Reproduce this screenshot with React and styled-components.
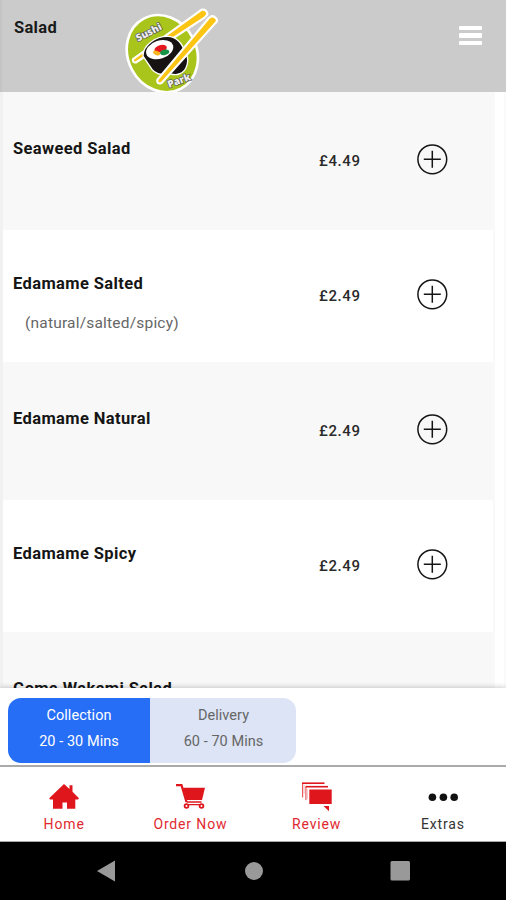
import React from "react";
import styled, { createGlobalStyle } from "styled-components";

const items = [
  { name: "Seaweed Salad", price: "£4.49" },
  { name: "Edamame Salted", price: "£2.49", note: "(natural/salted/spicy)" },
  { name: "Edamame Natural", price: "£2.49" },
  { name: "Edamame Spicy", price: "£2.49" },
  { name: "Goma Wakami Salad" },
];

const Logo = () => (
  <LogoSvg viewBox="0 0 360 276">
    <ellipse
      cx="157"
      cy="161"
      rx="103"
      ry="119"
      transform="rotate(-28 157 161)"
      fill="#a9c51c"
      stroke="#fff"
      strokeWidth="8"
    />
    <Chopstick d="M72 179L276 32Q287 31 289 42L282 50L77 184Q71 185 72 179Z" />
    <path
      d="M99 168C99 134 138 109 172 109C201 109 220 134 224 158C241 174 233 214 207 222C190 228 178 218 170 222C151 227 134 219 126 208Z"
      fill="#171313"
      stroke="#fff"
      strokeWidth="4"
    />
    <ellipse cx="149" cy="149" rx="42" ry="27" transform="rotate(-18 149 149)" fill="#fff" />
    <ellipse cx="152" cy="146" rx="19" ry="11" transform="rotate(-16 152 146)" fill="#e4181e" />
    <ellipse cx="140" cy="159" rx="11" ry="6" transform="rotate(20 140 159)" fill="#f6b51d" />
    <ellipse cx="164" cy="157" rx="14" ry="8" transform="rotate(-12 164 157)" fill="#159447" />
    <Chopstick d="M145 241L299 56Q307 48 316 57Q320 62 313 68L153 246Q143 250 145 241Z" />
    <LogoText transform="translate(84 125) rotate(-27)">Sushi</LogoText>
    <LogoText transform="translate(177 264) rotate(-20)">Park</LogoText>
  </LogoSvg>
);

const PlusIcon = () => (
  <svg width="32" height="32" viewBox="0 0 32 32" fill="none" stroke="#151515">
    <circle cx="16.3" cy="16.3" r="14.4" strokeWidth="1.5" />
    <path d="M16.3 7.8V24.8M7.8 16.3H24.8" strokeWidth="1.5" />
  </svg>
);

const HomeIcon = () => (
  <TabSvg viewBox="0 0 30 30" fill="#df171d">
    <path d="M15 2L20.5 7V3.2H23.5V9.8L30 16.2L29 17.5H26.3V26.8H18V20.5H13.5V26.8H4V17.5H1L.2 16.2Z" />
  </TabSvg>
);

const CartIcon = () => (
  <TabSvg viewBox="0 0 30 30">
    <path d="M1 3.2H6.5L11.5 20" fill="none" stroke="#df171d" strokeWidth="2.2" />
    <path d="M8 5.7H30L27 18H11.5Z" fill="#df171d" />
    <path d="M11.5 20H26.5M12 22.6H26" stroke="#df171d" strokeWidth="1.3" />
    <circle cx="11.5" cy="24" r="1.9" fill="#fff" stroke="#df171d" strokeWidth="1.8" />
    <circle cx="26.5" cy="24" r="1.9" fill="#fff" stroke="#df171d" strokeWidth="1.8" />
  </TabSvg>
);

const ReviewIcon = () => (
  <TabSvg viewBox="0 0 30 30">
    <g fill="none" stroke="#df171d">
      <path d="M0 1.2H22.5" strokeWidth="1.6" />
      <path d="M3.5 4.7H26" strokeWidth="1.6" />
      <path d="M.6 1V15.5M3.9 5V18" strokeWidth="1.1" opacity=".75" />
      <path d="M2.2 3V12M5.4 7V17" strokeWidth=".7" opacity=".35" />
    </g>
    <path d="M7.3 7.5H29.7V22H7.3Z" fill="#df171d" />
    <path d="M21.5 24H27V29.2Z" fill="#df171d" />
  </TabSvg>
);

const DotsIcon = () => (
  <TabSvg viewBox="0 0 30 30" fill="#111">
    <circle cx="4.4" cy="15.2" r="3.8" />
    <circle cx="15.4" cy="15.2" r="3.8" />
    <circle cx="26.2" cy="15.2" r="3.8" />
  </TabSvg>
);

const tabs = [
  { label: "Home", Icon: HomeIcon },
  { label: "Order Now", Icon: CartIcon },
  { label: "Review", Icon: ReviewIcon },
  { label: "Extras", Icon: DotsIcon, dark: true },
];

const App = () => {
  return (
    <Screen>
      <GlobalStyle />
      <Header>
        <Title>Salad</Title>
        <Logo />
        <MenuButton aria-label="Menu">
          <MenuBar />
          <MenuBar />
          <MenuBar />
        </MenuButton>
      </Header>
      <List>
        {items.map((item, i) => (
          <Item key={item.name} $shaded={i % 2 === 0}>
            <ItemInfo>
              <ItemName>{item.name}</ItemName>
              {item.note && <ItemNote>{item.note}</ItemNote>}
            </ItemInfo>
            {item.price && (
              <>
                <Price>{item.price}</Price>
                <AddButton aria-label={`Add ${item.name}`}>
                  <PlusIcon />
                </AddButton>
              </>
            )}
          </Item>
        ))}
      </List>
      <OrderBar>
        <Option $active>
          <span>Collection</span>
          <span>20 - 30 Mins</span>
        </Option>
        <Option>
          <span>Delivery</span>
          <span>60 - 70 Mins</span>
        </Option>
      </OrderBar>
      <TabBar>
        {tabs.map(({ label, Icon, dark }) => (
          <Tab key={label} $dark={dark}>
            <Icon />
            <span>{label}</span>
          </Tab>
        ))}
      </TabBar>
      <SystemBar>
        <svg width="20" height="22" viewBox="0 0 20 22">
          <path d="M18 .5V21.5L0 11Z" fill="#999" />
        </svg>
        <svg width="18" height="18" viewBox="0 0 18 18">
          <circle cx="9" cy="9" r="9" fill="#999" />
        </svg>
        <svg width="20" height="20" viewBox="0 0 20 20">
          <rect width="19.5" height="19.5" x=".5" rx="1.5" fill="#999" />
        </svg>
      </SystemBar>
    </Screen>
  );
};

export default App;

const GlobalStyle = createGlobalStyle`
  * {
    box-sizing: border-box;
  }
  body {
    margin: 0;
    font-family: Roboto, sans-serif;
  }
  button {
    padding: 0;
    border: 0;
    background: none;
    font: inherit;
  }
`;

const Screen = styled.div`
  display: flex;
  flex-direction: column;
  width: 506px;
  height: 900px;
  overflow: hidden;
  background: #fff;
`;
const Header = styled.header`
  display: flex;
  align-items: flex-start;
  flex: 0 0 92px;
  background: #cbcbcb;
  border-left: 2px solid #c4c4c4;
`;
const Title = styled.h1`
  width: 108px;
  margin: 0;
  padding: 18px 0 0 12px;
  font-size: 16.5px;
  line-height: 20px;
  font-weight: 700;
  letter-spacing: 0.3px;
  color: #1a1a1a;
`;
const LogoSvg = styled.svg`
  width: 120px;
  height: 92px;
`;
const LogoText = styled.text`
  font-family: "Open Sans", sans-serif;
  font-size: 30px;
  font-weight: 800;
  fill: #eee;
  stroke: #555;
  stroke-width: 4px;
  paint-order: stroke;
`;
const Chopstick = styled.path`
  fill: #fcc413;
  stroke: #fff;
  stroke-width: 13px;
  stroke-linejoin: round;
  paint-order: stroke;
`;
const MenuButton = styled.button`
  display: flex;
  flex-direction: column;
  gap: 3px;
  margin: 26px 24px 0 auto;
`;
const MenuBar = styled.span`
  width: 23px;
  height: 4.4px;
  border-radius: 1px;
  background: #fff;
`;
const List = styled.main`
  flex: 0 0 596px;
  overflow: hidden;
  padding-right: 9px;
  border-left: 3px solid #f1f1f1;
  border-right: 2px solid #fafafa;
`;
const Item = styled.div`
  display: flex;
  align-items: flex-start;
  height: ${({ $shaded }) => ($shaded ? "138px" : "132px")};
  padding: ${({ $shaded }) => ($shaded ? "47px" : "44px")} 0 0 10px;
  background: ${({ $shaded }) => ($shaded ? "#f8f8f8" : "#fff")};
  border-right: 2px solid #f9f9f9;
`;
const ItemInfo = styled.div`
  width: 306px;
`;
const ItemName = styled.h2`
  margin: 0;
  font-size: 16.5px;
  line-height: 20px;
  font-weight: 700;
  letter-spacing: 0.38px;
  color: #151515;
`;
const ItemNote = styled.p`
  margin: 19px 0 0 12px;
  font-size: 15.5px;
  line-height: 20px;
  letter-spacing: 0.2px;
  color: #666;
`;
const Price = styled.span`
  width: 97px;
  padding-top: 12px;
  font-size: 15px;
  line-height: 20px;
  font-weight: 500;
  letter-spacing: 0.6px;
  color: #2a2a2a;
`;
const AddButton = styled.button`
  height: 32px;
  margin-top: 4px;
`;
const OrderBar = styled.section`
  position: relative;
  display: flex;
  flex: 0 0 77px;
  padding: 10px 8px 2px;
  background: #fff;
  box-shadow: 0 -1px 5px rgba(0, 0, 0, 0.2);
`;
const Option = styled.button`
  display: flex;
  flex-direction: column;
  gap: 6px;
  align-items: center;
  width: ${({ $active }) => ($active ? "142px" : "146px")};
  height: 65px;
  padding: 8px 0 0 ${({ $active }) => ($active ? "0" : "1px")};
  border-radius: ${({ $active }) => ($active ? "13px 0 0 13px" : "0 13px 13px 0")};
  background: ${({ $active }) => ($active ? "#266ef6" : "#dce4f5")};
  color: ${({ $active }) => ($active ? "#fff" : "#666")};
  font-size: 14.5px;
  line-height: 20px;
  letter-spacing: 0.05px;
`;
const TabBar = styled.nav`
  position: relative;
  display: flex;
  flex: 0 0 77px;
  padding-left: 1px;
  background: #fff;
  border-top: 2px solid #aaa;
  border-bottom: 1px solid #aaa;
`;
const Tab = styled.button`
  display: flex;
  flex: 1;
  flex-direction: column;
  align-items: center;
  padding-top: 15px;
  color: ${({ $dark }) => ($dark ? "#333" : "#df2930")};
  font-size: 14px;
  line-height: 20px;
  letter-spacing: 0.85px;
`;
const TabSvg = styled.svg`
  width: 30px;
  height: 30px;
  margin-bottom: 2px;
`;
const SystemBar = styled.footer`
  display: flex;
  flex: 1;
  align-items: center;
  justify-content: space-between;
  padding: 0 96px 0 97px;
  background: #000;
`;
